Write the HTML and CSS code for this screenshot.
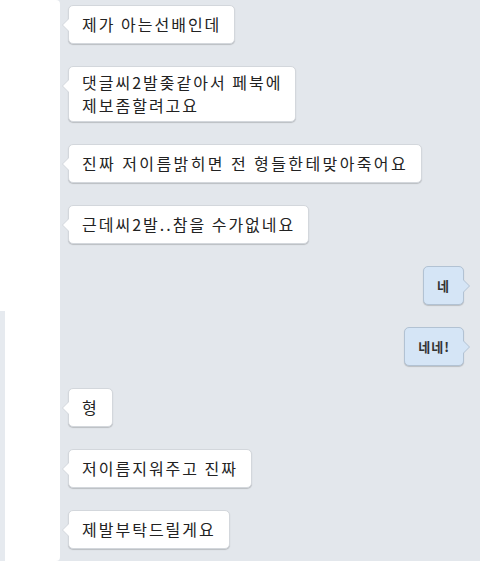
FILE: index.html
```html
<!DOCTYPE html>
<html>
<head>
    <meta charset="utf-8" />
    <title>대화</title>
    <link rel="stylesheet" href="styles.css">
</head>
<body>
    <div class="screen">
        <!-- 가려진 프로필 영역 -->
        <div class="censor"></div>

        <div class="chat">
            <div class="msg in"><div class="bubble">제가 아는선배인데</div></div>
            <div class="msg in"><div class="bubble multi">댓글씨2발좆같아서 페북에<br>제보좀할려고요</div></div>
            <div class="msg in"><div class="bubble wide">진짜 저이름밝히면 전 형들한테맞아죽어요</div></div>
            <div class="msg in"><div class="bubble">근데씨2발..참을 수가없네요</div></div>
            <div class="msg out"><div class="bubble">네</div></div>
            <div class="msg out"><div class="bubble">네네!</div></div>
            <div class="msg in"><div class="bubble">형</div></div>
            <div class="msg in"><div class="bubble">저이름지워주고 진짜</div></div>
            <div class="msg in"><div class="bubble">제발부탁드릴게요</div></div>
        </div>
    </div>
</body>
</html>
```

FILE: styles.css
```css
/* 전체 */
body {
    margin: 0;
    background-color: #e3e7ec;
    font-family: "Noto Sans CJK KR", "Noto Sans", sans-serif;
    color: #222;
}

.screen {
    display: flex;
    height: 561px;
    overflow: hidden;
}

/* 흰색으로 지운 왼쪽 부분 (아래쪽 왼편에 배경이 조금 보임) */
.censor {
    width: 60px;
    flex-shrink: 0;
    background: #ffffff linear-gradient(to right, #e6eaef 0 5px, transparent 5px) no-repeat left bottom / 100% 250px;
    border-radius: 0 4px 4px 0;
}

/* 대화 목록 */
.chat {
    flex: 1;
    display: flex;
    flex-direction: column;
    gap: 22px;
    padding: 5px 16px 0 8px;
}

.msg {
    display: flex;
}

.msg.out {
    justify-content: flex-end;
}

/* 말풍선 */
.bubble {
    position: relative;
    padding: 7px 13px;
    font-size: 16px;
    line-height: 23px;
    letter-spacing: 2px;
    background-color: #ffffff;
    border: 1px solid #d3d7dc;
    border-radius: 5px;
    box-shadow: 0 1px 1px rgba(0, 0, 0, 0.18);
}

.bubble.multi {
    padding-top: 4px;
    padding-bottom: 4px;
}

.bubble.wide {
    letter-spacing: 2.4px;
}

/* 꼬리 */
.bubble::before,
.bubble::after {
    content: "";
    position: absolute;
    top: 12px;
    border-style: solid;
    border-color: transparent;
}

.in .bubble::before {
    left: -7px;
    border-width: 7px 7px 7px 0;
    border-right-color: #d3d7dc;
}

.in .bubble::after {
    left: -6px;
    border-width: 7px 7px 7px 0;
    border-right-color: #ffffff;
}

.out .bubble {
    font-size: 13px;
    font-weight: 700;
    letter-spacing: 1px;
    color: #333;
    background-color: #d5e5f6;
    border-color: #b2c2d3;
}

.out .bubble::before {
    right: -7px;
    border-width: 7px 0 7px 7px;
    border-left-color: #b2c2d3;
}

.out .bubble::after {
    right: -6px;
    border-width: 7px 0 7px 7px;
    border-left-color: #d5e5f6;
}
```
